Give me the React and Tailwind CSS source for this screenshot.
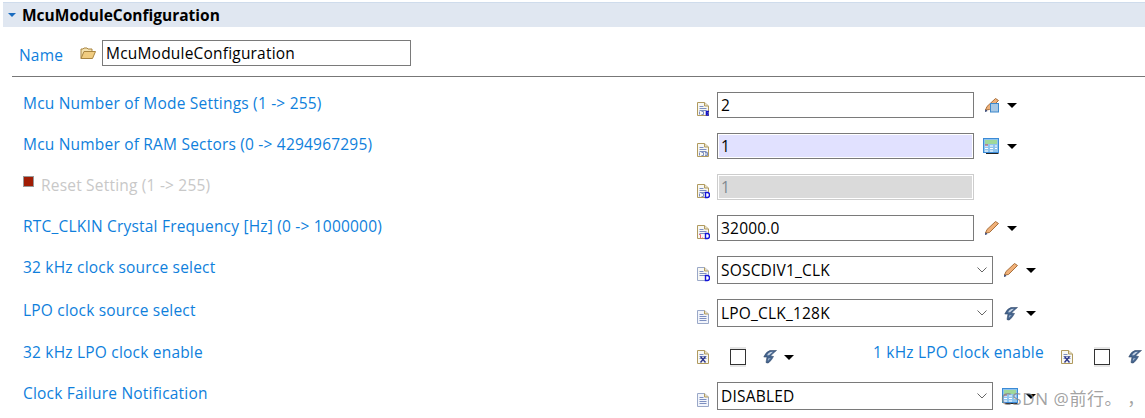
import React from 'react';

const font = "font-['Open_Sans','Noto_Sans','Noto_Sans_CJK_SC',sans-serif]";
const labelText = 'text-[15.5px] tracking-[0.2px]';
const fieldText = 'text-[15.5px] tracking-[0.2px]';

function DocIcon({ badge }) {
  return (
    <svg width="14" height="16" viewBox="0 0 14 16" className="block">
      <path d="M1.5 1.5H8.5L12.5 5V14.5H1.5Z" fill={badge === 'plain' ? '#f2f5fb' : '#f8f8f4'} stroke={badge === 'plain' || badge === 'D2' ? '#9aa8c8' : '#b09a5e'} />
      <path d="M8.5 1.5V5H12.5" fill="#e8e0c8" stroke="#b09a5e" />
      <path d="M3.5 5.5H7.5M3.5 7.5H10.5M3.5 9.5H10.5" stroke="#7d8fc0" />
      {badge === 'plain' && <path d="M3.5 11.5H10.5" stroke="#7d8fc0" />}
      {(badge === 'E' || badge === 'N' || badge === 'D') && <path d="M3.5 10.5V13.5M5.5 10.5H7.5V13.5H5.5" stroke="#7d8fc0" fill="none" />}
      {badge === 'N' && <path d="M9 10.5H11.5V13.5H9M9 12H11" stroke="#7d8fc0" fill="none" />}
      {badge === 'E' && <path d="M13 10.5H10.5V14H13M10 12.2H12.5" stroke="#1414c8" strokeWidth="1.6" fill="none" />}
      {(badge === 'D' || badge === 'D2' || badge === 'F') && <path d="M9.5 9.5H11.5Q13.5 9.5 13.5 12T11.5 14.5H9.5Z" stroke="#1414d8" strokeWidth="1.4" fill="#fff" />}
      {badge === 'F' && <path d="M3 10.5H4.5V14M6 14H7" stroke="#f0607a" fill="none" />}
      {badge === 'X' && <path d="M4.5 7.5L9.5 13.5M9.5 7.5L4.5 13.5" stroke="#30388a" strokeWidth="1.4" />}
    </svg>
  );
}

function Pencil({ calc }) {
  return (
    <svg width="16" height="16" viewBox="0 0 16 16" className="block">
      <path d="M1.5 13L3 9.5L11.5 1.5L14.5 3.5L5.5 12.5Z" fill="#f0b078" stroke="#a8703c" />
      <path d="M1 15L1.5 12.5L3.5 14Z" fill="#142860" />
      {calc && <rect x="6.5" y="6.5" width="8" height="8.5" fill="#a8c8e4" stroke="#3d88cc" />}
    </svg>
  );
}

function Calc() {
  return (
    <svg width="16" height="16" viewBox="0 0 16 16" className="block">
      <rect x="0.5" y="0.5" width="15" height="14" fill="#8fc4ee" stroke="#3b8ad6" />
      <rect x="2" y="2" width="12" height="4" fill="#9fd89a" />
      <path d="M2 8H5M7 8H10M12 8H14M2 10.5H5M7 10.5H10M12 10.5H14M2 13H5M7 13H10" stroke="#fff" />
      <path d="M2 7H5" stroke="#c04848" />
      <path d="M3 15.5H15.5" stroke="#222" />
    </svg>
  );
}

function Wizard() {
  return (
    <svg width="14" height="15" viewBox="0 0 14 15" className="block">
      <path d="M13.5 1.5L7 1.5Q3 2.5 0.8 8L4 8L3 13.5Q4.5 14.5 6 13.5Q9 10.5 10.5 7.5L7.5 7Q9.5 4.5 13.5 1.5Z" fill="#44648e" stroke="#34496a" strokeWidth="0.6" />
      <path d="M10 2.7L7.3 2.9Q5.2 3.8 4 6.2L6 6.2Z" fill="#c8d4e4" />
      <path d="M5 9.5L4.8 12L7.8 9Z" fill="#9fb2cc" />
    </svg>
  );
}

function Arrow() {
  return <span className="block h-0 w-0 border-x-[5px] border-t-[5px] border-x-transparent border-t-black" />;
}

function Chevron() {
  return (
    <svg width="10" height="6" viewBox="0 0 10 6" className="block">
      <path d="M0.5 0.5L5 5L9.5 0.5" stroke="#666" fill="none" />
    </svg>
  );
}

function Checkbox() {
  return (
    <span className="block bg-[#e6e6e6] py-[2px]">
      <span className="block size-[16px] border border-[#333] bg-white" />
    </span>
  );
}

function TextBox({ value, variant }) {
  const look =
    variant === 'focus'
      ? 'border-[#7a7a7a] bg-[#e1e1ff] ring-1 ring-inset ring-white'
      : variant === 'off'
        ? 'border-[#cdcdcd] bg-[#dadada] text-[#808890] ring-1 ring-inset ring-white'
        : 'border-[#7a7a7a] bg-white';
  return (
    <div className={`flex h-[26px] w-[257px] items-center border pl-[3px] ${fieldText} ${look}`}>
      <span className="pt-[1px]">{value}</span>
    </div>
  );
}

function Combo({ value }) {
  return (
    <div className={`flex h-[28px] w-[276px] items-center justify-between border border-[#7a7a7a] bg-white pl-[3px] pr-[5px] ${fieldText}`}>
      <span className="pt-[1px]">{value}</span>
      <Chevron />
    </div>
  );
}

function Row({ height, label, labelClass = 'text-[#0f7fdc]', labelOffset = 'mt-[1px]', marker, children }) {
  return (
    <div className={`flex items-start ${height}`}>
      <div className={`flex h-[22px] w-[673px] shrink-0 items-center whitespace-nowrap ${labelOffset} ${labelText} ${labelClass}`}>
        {marker && <span className="mr-[7px] mb-[9px] size-[11px] border border-[#999] bg-[#a01c04]" />}
        {label}
      </div>
      {children}
    </div>
  );
}

function Control({ icon, offset = '-ml-0', children }) {
  return (
    <div className={`flex items-center ${offset}`}>
      <span className="mr-[7px] mt-[7px]"><DocIcon badge={icon} /></span>
      {children}
    </div>
  );
}

function Tail({ gap = 'ml-[10px]', arrowGap = 'ml-[7px]', children }) {
  return (
    <div className={`flex items-center ${gap}`}>
      {children}
      <span className={arrowGap}><Arrow /></span>
    </div>
  );
}

export default function App() {
  return (
    <div className={`h-[418px] w-[1145px] overflow-hidden bg-white text-black ${font}`}>
      <div className="ml-[3px] mt-[2px] flex h-[25px] items-center border-t border-[#cfdcec] bg-[#e0e7f1] pl-[5px]">
        <span className="mr-[6px] h-0 w-0 border-x-[4px] border-t-[4px] border-x-transparent border-t-[#1a6cc0]" />
        <span className="pt-[1px] text-[15.5px] font-bold">McuModuleConfiguration</span>
      </div>
      <div className="ml-[12px] flex h-[50px] items-start border-b border-[#777] pt-[13px]">
        <span className={`mt-[4px] w-[68px] pl-[7px] ${labelText} text-[#0f7fdc]`}>Name</span>
        <svg width="16" height="14" viewBox="0 0 16 14" className="mt-[6px] mr-[6px]">
          <path d="M1 12.5V3H3L4 2H7L8 3H12V5" fill="#f4e2b0" stroke="#a88440" />
          <path d="M1 12.5L4 5.5H15.5L12.5 12.5Z" fill="#f0cc80" stroke="#a88440" />
        </svg>
        <div className={`flex h-[26px] w-[309px] items-center border border-[#7a7a7a] pl-[3px] ${fieldText}`}>
          <span className="pt-[1px]">McuModuleConfiguration</span>
        </div>
      </div>
      <div className="pl-[23px] pt-[15px]">
        <Row height="h-[41px]" label="Mcu Number of Mode Settings (1 -> 255)">
          <Control icon="E"><TextBox value="2" /><Tail><Pencil calc /></Tail></Control>
        </Row>
        <Row height="h-[41px]" label="Mcu Number of RAM Sectors (0 -> 4294967295)">
          <Control icon="N"><TextBox value="1" variant="focus" /><Tail gap="ml-[9px]" arrowGap="ml-[8px]"><Calc /></Tail></Control>
        </Row>
        <Row height="h-[41px]" label="Reset Setting (1 -> 255)" labelClass="text-[#c8c8c8]" marker>
          <Control icon="D"><TextBox value="1" variant="off" /></Control>
        </Row>
        <Row height="h-[41px]" label="RTC_CLKIN Crystal Frequency [Hz] (0 -> 1000000)">
          <Control icon="F"><TextBox value="32000.0" /><Tail><Pencil /></Tail></Control>
        </Row>
        <Row height="h-[43px]" label="32 kHz clock source select">
          <Control icon="D2"><Combo value="SOSCDIV1_CLK" /><Tail><Pencil /></Tail></Control>
        </Row>
        <Row height="h-[41px]" label="LPO clock source select">
          <Control icon="plain"><Combo value="LPO_CLK_128K" /><Tail gap="ml-[11px]" arrowGap="ml-[8px]"><Wizard /></Tail></Control>
        </Row>
        <Row height="h-[42px]" label="32 kHz LPO clock enable" labelOffset="mt-[2px]">
          <div className="flex flex-1 items-start pt-[7px]">
            <span className="mt-[2px]"><DocIcon badge="X" /></span>
            <span className="ml-[20px]"><Checkbox /></span>
            <span className="ml-[17px] mr-[7px] mt-[2px]"><Wizard /></span>
            <span className="mt-[8px]"><Arrow /></span>
            <span className={`-mt-[6px] ml-[79px] w-[187px] whitespace-nowrap ${labelText} text-[#0f7fdc]`}>1 kHz LPO clock enable</span>
            <span className="mt-[2px]"><DocIcon badge="X" /></span>
            <span className="ml-[20px]"><Checkbox /></span>
            <span className="ml-[18px] mt-[2px]"><Wizard /></span>
          </div>
        </Row>
        <Row height="h-[28px]" label="Clock Failure Notification">
          <Control icon="plain"><Combo value="DISABLED" /><Tail gap="ml-[9px]" arrowGap="ml-[8px]"><Calc /></Tail></Control>
        </Row>
      </div>
      <span className="absolute left-[1001px] top-[386px] text-[17px] tracking-[0.6px] text-[#8a8a8a]/80">CSDN @前行。 ，</span>
    </div>
  );
}
